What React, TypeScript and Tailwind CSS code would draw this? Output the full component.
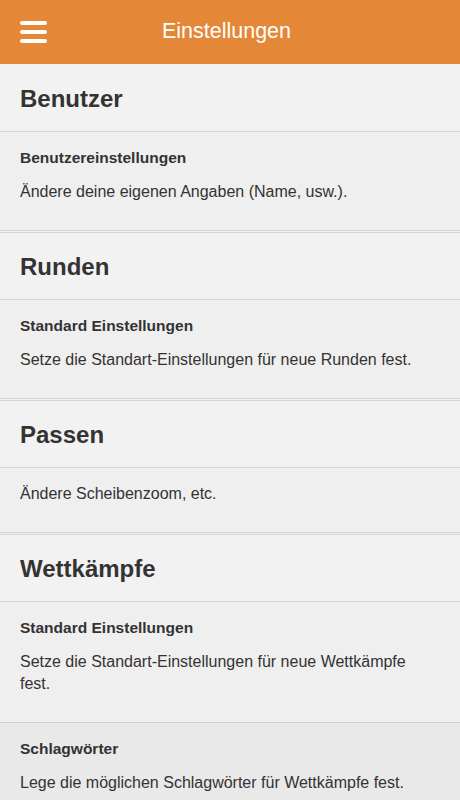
import React from "react";

type Item = { title?: string; text: string; active?: boolean };
type Section = { name: string; items: Item[] };

const sections: Section[] = [
  {
    name: "Benutzer",
    items: [{ title: "Benutzereinstellungen", text: "Ändere deine eigenen Angaben (Name, usw.)." }],
  },
  {
    name: "Runden",
    items: [{ title: "Standard Einstellungen", text: "Setze die Standart-Einstellungen für neue Runden fest." }],
  },
  {
    name: "Passen",
    items: [{ text: "Ändere Scheibenzoom, etc." }],
  },
  {
    name: "Wettkämpfe",
    items: [
      { title: "Standard Einstellungen", text: "Setze die Standart-Einstellungen für neue Wettkämpfe fest." },
      { title: "Schlagwörter", text: "Lege die möglichen Schlagwörter für Wettkämpfe fest.", active: true },
    ],
  },
];

export default function App() {
  return (
    <div className="w-[460px] h-[800px] overflow-hidden bg-[#f2f2f2] text-[#333] font-[family-name:'Liberation_Sans',Arial,sans-serif]">
      {/* top bar */}
      <header className="h-16 bg-[#e48737] flex items-center relative">
        <button className="absolute left-5 top-[21px] flex flex-col gap-[5px]">
          <span className="block w-[27px] h-1 rounded-sm bg-white" />
          <span className="block w-[27px] h-1 rounded-sm bg-white" />
          <span className="block w-[27px] h-1 rounded-sm bg-white" />
        </button>
        <h1 className="flex-1 text-center text-white text-[21.5px] leading-none pr-[7px]">Einstellungen</h1>
      </header>

      {sections.map((s, i) => (
        <div key={s.name} className={i > 0 ? "mt-px" : ""}>
          <div
            className={
              "h-[68px] flex items-center px-5 bg-[#f2f2f2] border-b border-[#d6d6d6] " +
              (i > 0 ? "border-t" : "")
            }
          >
            <h2 className="text-[24px] font-bold leading-none pt-[2px]">{s.name}</h2>
          </div>
          {s.items.map((it, j) => (
            <div
              key={j}
              className={
                "pl-5 pr-7 pt-[15px] pb-[27px] border-b border-[#d0d0d0] " +
                (it.active ? "bg-[#e9e9e9]" : "bg-[#efefef]")
              }
            >
              {it.title && (
                <div className="text-[15.5px] font-bold leading-[22px] mb-[12px]">{it.title}</div>
              )}
              <p className="text-[16px] leading-[22px]">{it.text}</p>
            </div>
          ))}
        </div>
      ))}
    </div>
  );
}
